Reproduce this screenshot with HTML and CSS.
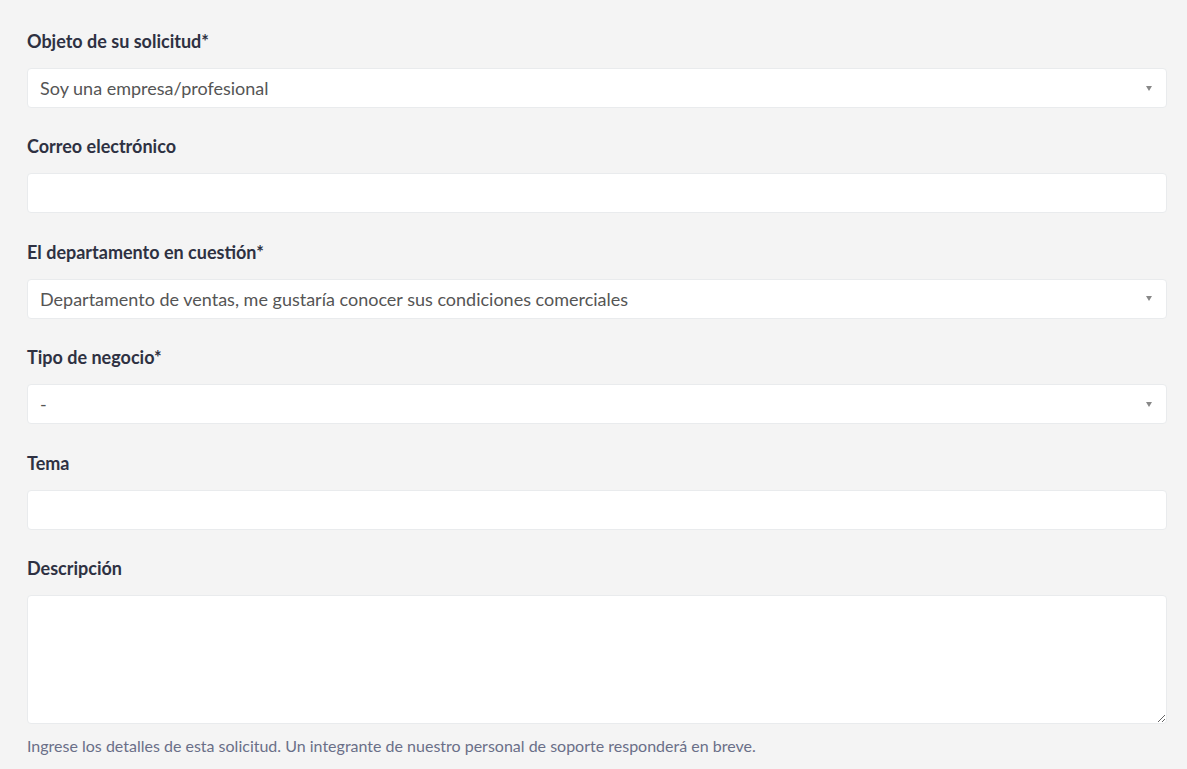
FILE: index.html
```html
<!DOCTYPE html>
<html>

<head>
    <meta http-equiv="Content-Type" content="text/html;charset=utf-8">
    <title>Enviar una solicitud</title>
    <link rel="stylesheet" href="styles.css">
</head>

<body>
    <form class="request-form">
        <div class="form-field">
            <label>Objeto de su solicitud*</label>
            <div class="select-box">
                <span>Soy una empresa/profesional</span>
                <i class="caret"></i>
            </div>
        </div>

        <div class="form-field">
            <label>Correo electrónico</label>
            <input type="text" class="text-input">
        </div>

        <div class="form-field">
            <label>El departamento en cuestión*</label>
            <div class="select-box">
                <span>Departamento de ventas, me gustaría conocer sus condiciones comerciales</span>
                <i class="caret"></i>
            </div>
        </div>

        <div class="form-field">
            <label>Tipo de negocio*</label>
            <div class="select-box">
                <span>-</span>
                <i class="caret"></i>
            </div>
        </div>

        <div class="form-field">
            <label>Tema</label>
            <input type="text" class="text-input">
        </div>

        <div class="form-field">
            <label>Descripción</label>
            <textarea class="text-area"></textarea>
            <p class="hint">Ingrese los detalles de esta solicitud. Un integrante de nuestro personal de soporte responderá en breve.</p>
        </div>
    </form>
</body>

</html>
```

FILE: styles.css
```css
body {
    margin: 0;
    background: #f4f4f4;
    font-family: Lato, "Open Sans", sans-serif;
    color: #2e3142;
}

.request-form {
    width: 1140px;
    padding: 29px 0 0 27px;
}

.form-field {
    margin-bottom: 26.4px;
}

.form-field label {
    display: block;
    font-size: 18px;
    font-weight: bold;
    line-height: 25px;
    margin-bottom: 14px;
}

.select-box,
.text-input,
.text-area {
    box-sizing: border-box;
    display: block;
    width: 100%;
    background: #fff;
    border: 1px solid #e9ebed;
    border-radius: 4px;
    font-family: inherit;
}

.select-box,
.text-input {
    height: 40px;
}

.select-box {
    display: flex;
    align-items: center;
    justify-content: space-between;
    padding: 0 14px 0 12px;
    font-size: 18px;
    color: #555;
}

.caret {
    width: 0;
    height: 0;
    border-left: 3.5px solid transparent;
    border-right: 3.5px solid transparent;
    border-top: 5px solid #888;
}

.text-area {
    height: 129px;
    resize: vertical;
}

.hint {
    margin: 12px 0 0;
    font-size: 16px;
    line-height: 20px;
    color: #6a6f88;
}
```
